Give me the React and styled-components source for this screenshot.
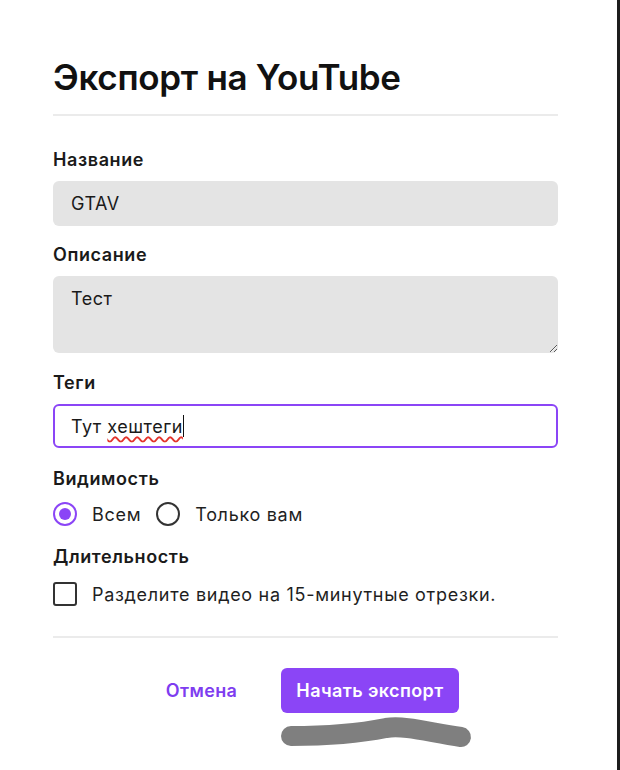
import React from 'react'
import styled, {createGlobalStyle} from 'styled-components'

const purple = '#8b45f6'

const GlobalStyle = createGlobalStyle`
  html, body {
    margin: 0;
    padding: 0;
    background: #fff;
  }
  body {
    font-family: Inter, "Noto Sans", "Liberation Sans", sans-serif;
    color: #161616;
    letter-spacing: 0.5px;
  }
`

const Page = styled.div`
  box-sizing: border-box;
  min-height: 100vh;
  border-right: 3px solid #1c1c1c;
  padding: 56px 59px 0 53px;
`

const Title = styled.h1`
  margin: 0;
  font-size: 35px;
  line-height: 42px;
  font-weight: 600;
  letter-spacing: -0.3px;
  color: #111;
`

const Divider = styled.hr`
  border: none;
  height: 2px;
  background: #ebebeb;
  margin: ${({$top}) => $top}px 0 0;
`

const Form = styled.div`
  display: flex;
  flex-direction: column;
  padding-top: 32px;
`

const Section = styled.div`
  display: flex;
  flex-direction: column;
  gap: ${({$gap}) => $gap || 9}px;
  margin-top: ${({$top}) => $top || 0}px;
`

const Label = styled.div`
  font-size: 18px;
  line-height: 24px;
  font-weight: 600;
  letter-spacing: 0.6px;
  color: #1a1a1a;
`

const TextInput = styled.input`
  box-sizing: border-box;
  width: 100%;
  height: 45px;
  border: none;
  border-radius: 6px;
  background: #e4e4e4;
  padding: 0 18px;
  font: inherit;
  font-size: 18px;
  letter-spacing: 0.5px;
  color: #1a1a1a;
  outline: none;
`

const TextArea = styled.textarea`
  box-sizing: border-box;
  display: block;
  width: 100%;
  height: 77px;
  border: none;
  border-radius: 6px;
  background: #e4e4e4;
  padding: 11px 18px;
  font: inherit;
  font-size: 18px;
  line-height: 24px;
  letter-spacing: 0.5px;
  color: #1a1a1a;
  outline: none;
  resize: vertical;
`

const FocusedField = styled.div`
  box-sizing: border-box;
  display: flex;
  align-items: center;
  height: 44px;
  border: 2px solid ${purple};
  border-radius: 6px;
  background: #fff;
  padding: 0 16px;
  font-size: 18px;
  color: #1a1a1a;
  white-space: pre;
`

const Misspelled = styled.span`
  text-decoration: underline wavy #e3342c;
  text-decoration-thickness: 1.5px;
  text-underline-offset: 3px;
`

const Caret = styled.span`
  display: inline-block;
  width: 1.5px;
  height: 22px;
  background: #111;
`

const OptionRow = styled.div`
  display: flex;
  align-items: center;
  height: 24px;
`

const Option = styled.label`
  display: flex;
  align-items: center;
  gap: 15px;
  font-size: 18px;
  letter-spacing: 0.7px;
  color: #1f1f1f;
  margin-right: 15px;
`

const Radio = styled.span`
  box-sizing: border-box;
  width: 24px;
  height: 24px;
  border-radius: 50%;
  border: 2px solid ${({$checked}) => ($checked ? purple : '#333')};
  display: flex;
  align-items: center;
  justify-content: center;
  &::after {
    content: '';
    width: 12px;
    height: 12px;
    border-radius: 50%;
    background: ${({$checked}) => ($checked ? purple : 'transparent')};
  }
`

const Checkbox = styled.span`
  box-sizing: border-box;
  width: 24px;
  height: 24px;
  border-radius: 3px;
  border: 2px solid #333;
`

const Footer = styled.div`
  display: flex;
  justify-content: center;
  align-items: flex-start;
  gap: 28px;
  margin-top: 30px;
`

const CancelButton = styled.button`
  height: 45px;
  border: none;
  background: none;
  padding: 0 16px;
  font: inherit;
  font-size: 18px;
  font-weight: 600;
  letter-spacing: 0.4px;
  color: #7e3df0;
  cursor: pointer;
`

const ExportGroup = styled.div`
  display: flex;
  flex-direction: column;
  margin-right: -12px;
`

const PrimaryButton = styled.button`
  align-self: flex-start;
  height: 45px;
  border: none;
  border-radius: 6px;
  background: ${purple};
  padding: 0 15px;
  font: inherit;
  font-size: 18px;
  font-weight: 600;
  letter-spacing: 0.4px;
  color: #fff;
  cursor: pointer;
`

const Scribble = () => (
  <svg width="192" height="38" viewBox="0 0 192 38" style={{display: 'block'}}>
    <path
      d="M10 23 C 40 23, 75 21, 105 15 C 125 12, 150 20, 180 24"
      fill="none"
      stroke="#7f7f7f"
      strokeWidth="20"
      strokeLinecap="round"
    />
  </svg>
)

export default function App() {
  return (
    <Page>
      <GlobalStyle />
      <Title>Экспорт на YouTube</Title>
      <Divider $top={16} />
      <Form>
        <Section>
          <Label>Название</Label>
          <TextInput readOnly value="GTAV" />
        </Section>
        <Section $top={17}>
          <Label>Описание</Label>
          <TextArea readOnly value="Тест" />
        </Section>
        <Section $top={18}>
          <Label>Теги</Label>
          <FocusedField>
            Тут <Misspelled>хештеги</Misspelled>
            <Caret />
          </FocusedField>
        </Section>
        <Section $top={19} $gap={11}>
          <Label>Видимость</Label>
          <OptionRow>
            <Option>
              <Radio $checked />
              Всем
            </Option>
            <Option>
              <Radio />
              Только вам
            </Option>
          </OptionRow>
        </Section>
        <Section $top={19} $gap={13}>
          <Label>Длительность</Label>
          <OptionRow>
            <Option>
              <Checkbox />
              Разделите видео на 15-минутные отрезки.
            </Option>
          </OptionRow>
        </Section>
      </Form>
      <Divider $top={30} />
      <Footer>
        <CancelButton>Отмена</CancelButton>
        <ExportGroup>
          <PrimaryButton>Начать экспорт</PrimaryButton>
          <Scribble />
        </ExportGroup>
      </Footer>
    </Page>
  )
}
